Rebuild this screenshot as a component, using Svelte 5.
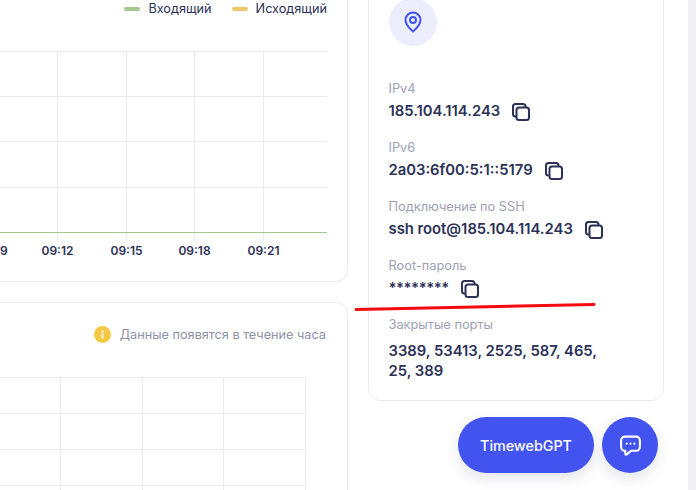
<script>
  const times = [
    { label: '09:12', x: 57.5 },
    { label: '09:15', x: 126.5 },
    { label: '09:18', x: 194.5 },
    { label: '09:21', x: 263.5 }
  ];
  const topRows = [5.5, 50.5, 95.5, 141.5];
  const bottomRows = [0.5, 36.5, 72.5, 108.5];
  const bottomCols = [60.5, 142.5, 223.5, 305.5];

  const fields = [
    { label: 'IPv4', value: '185.104.114.243' },
    { label: 'IPv6', value: '2a03:6f00:5:1::5179' },
    { label: 'Подключение по SSH', value: 'ssh root@185.104.114.243' },
    { label: 'Root-пароль', value: '********', secret: true }
  ];
</script>

{#snippet copyIcon()}
  <svg class="copy" viewBox="0 0 20 20" width="20" height="20" fill="none" stroke="currentColor" stroke-width="2">
    <path d="M4.5 14.5 A2.5 2.5 0 0 1 2 12 V4.5 A2.5 2.5 0 0 1 4.5 2 H12 A2.5 2.5 0 0 1 14.5 4.5" stroke-linecap="round" />
    <rect x="5.5" y="5.5" width="12.5" height="12.5" rx="2.5" />
  </svg>
{/snippet}

<div class="page">
  <main class="content">
    <div class="left">
      <section class="card traffic">
        <div class="legend">
          <span class="key"><i class="swatch in"></i>Входящий</span>
          <span class="key"><i class="swatch out"></i>Исходящий</span>
        </div>
        <svg class="chart" width="348" height="195" viewBox="0 0 348 195">
          {#each topRows as y}
            <line x1="0" x2="327" y1={y} y2={y} stroke="#e9ebf1" />
          {/each}
          {#each times as t}
            <line x1={t.x} x2={t.x} y1="5" y2="195" stroke="#e9ebf1" />
          {/each}
          <line x1="0" x2="327" y1="186.5" y2="186.5" stroke="#a3c78f" />
        </svg>
        <div class="axis">
          <span class="tick" style="left: 0px">9</span>
          {#each times as t}
            <span class="tick mid" style="left: {t.x}px">{t.label}</span>
          {/each}
        </div>
      </section>

      <section class="card data">
        <div class="notice">
          <svg viewBox="0 0 16 16" width="17" height="17">
            <circle cx="8" cy="8" r="8" fill="#f4c842" />
            <rect x="7.1" y="7" width="1.8" height="4.6" fill="#fff" />
            <rect x="7.1" y="4.2" width="1.8" height="1.8" fill="#fff" />
          </svg>
          <span>Данные появятся в течение часа</span>
        </div>
        <svg class="grid" width="348" height="120" viewBox="0 0 348 120">
          {#each bottomRows as y}
            <line x1="0" x2="305.5" y1={y} y2={y} stroke="#e9ebf1" />
          {/each}
          {#each bottomCols as x}
            <line x1={x} x2={x} y1="0" y2="120" stroke="#e9ebf1" />
          {/each}
        </svg>
      </section>
    </div>

    <aside class="card info">
      <div class="pin">
        <svg viewBox="0 0 20 22" width="20" height="22" fill="none" stroke="#4353f0" stroke-width="2">
          <path d="M10 20.5 C6 17 2.5 13.8 2.5 9 A7.5 7.5 0 0 1 17.5 9 C17.5 13.8 14 17 10 20.5 Z" stroke-linejoin="round" />
          <circle cx="10" cy="9" r="3" />
        </svg>
      </div>
      {#each fields as f}
        <div class="field">
          <div class="label">{f.label}</div>
          <div class="value" class:secret={f.secret}>
            <span>{f.value}</span>
            {@render copyIcon()}
          </div>
        </div>
      {/each}
      <div class="field">
        <div class="label">Закрытые порты</div>
        <div class="value ports">3389, 53413, 2525, 587, 465, 25, 389</div>
      </div>
    </aside>
  </main>
  <div class="scrollbar"></div>

  <svg class="scribble" width="696" height="490" viewBox="0 0 696 490">
    <path d="M356 309.5 L594 304.5" fill="none" stroke="#f50a10" stroke-width="3" stroke-linecap="round" />
  </svg>

  <div class="floating">
    <button class="gpt">TimewebGPT</button>
    <button class="chat" aria-label="Чат">
      <svg viewBox="0 0 24 24" width="25" height="25" fill="none" stroke="#fff" stroke-width="2">
        <path d="M6.5 3.5 H17.5 A3.5 3.5 0 0 1 21 7 V13.5 A3.5 3.5 0 0 1 17.5 17 H12.5 L8.5 20.5 C7.8 21 7 20.7 7 19.8 V17 H6.5 A3.5 3.5 0 0 1 3 13.5 V7 A3.5 3.5 0 0 1 6.5 3.5 Z" stroke-linejoin="round" />
        <circle cx="8.3" cy="10.2" r="1" fill="#fff" stroke="none" />
        <circle cx="12" cy="10.2" r="1" fill="#fff" stroke="none" />
        <circle cx="15.7" cy="10.2" r="1" fill="#fff" stroke="none" />
      </svg>
    </button>
  </div>
</div>

<style>
  :global(body) {
    margin: 0;
    background: #fff;
    font-family: Inter, "Liberation Sans", sans-serif;
    color: #2b3157;
  }

  .page {
    position: relative;
    display: flex;
    width: 696px;
    height: 490px;
    overflow: hidden;
    background: #fff;
  }

  .content {
    flex: 1;
    display: flex;
    align-items: flex-start;
    gap: 20px;
    margin-top: -40px;
  }

  .left {
    width: 348px;
    flex: none;
    display: flex;
    flex-direction: column;
    gap: 20px;
  }

  .card {
    box-sizing: border-box;
    background: #fff;
    border: 1px solid #e9ebf1;
    border-radius: 12px;
  }

  .left .card {
    border-left: none;
    border-top-left-radius: 0;
    border-bottom-left-radius: 0;
  }

  .traffic {
    height: 322px;
    padding-top: 38px;
  }

  .legend {
    display: flex;
    justify-content: flex-end;
    gap: 20px;
    padding-right: 20px;
    font-size: 12.7px;
    line-height: 20px;
  }

  .key {
    display: flex;
    align-items: center;
    gap: 8px;
  }

  .swatch {
    width: 16px;
    height: 4px;
    border-radius: 2px;
  }

  .swatch.in { background: #a3c78f; }
  .swatch.out { background: #ecc868; }

  .chart {
    display: block;
    margin-top: 27px;
  }

  .axis {
    position: relative;
    height: 20px;
    font-size: 12px;
    font-weight: 600;
    line-height: 20px;
  }

  .tick {
    position: absolute;
    top: 0;
  }

  .tick.mid {
    transform: translateX(-50%);
  }

  .data {
    height: 240px;
  }

  .notice {
    display: flex;
    justify-content: flex-end;
    align-items: center;
    gap: 9px;
    padding: 23px 21px 0 0;
    font-size: 12.7px;
    line-height: 16px;
    color: #8f93a8;
  }

  .grid {
    display: block;
    margin-top: 34px;
  }

  .info {
    width: 296px;
    height: 441px;
    flex: none;
    padding: 37px 20px 0 19.5px;
  }

  .pin {
    width: 48px;
    height: 48px;
    border-radius: 50%;
    background: #eceefe;
    display: flex;
    align-items: center;
    justify-content: center;
    margin-bottom: 33px;
  }

  .field {
    margin-bottom: 14px;
  }

  .label {
    font-size: 12.8px;
    line-height: 20px;
    margin-bottom: -1px;
    color: #9ea2b5;
  }

  .value {
    display: flex;
    align-items: center;
    gap: 11px;
    min-height: 26px;
    font-size: 14.8px;
    font-weight: 600;
    line-height: 24px;
  }

  .value.secret span {
    letter-spacing: -0.45px;
  }

  .ports {
    display: block;
    max-width: 215px;
    margin-top: 7px;
    line-height: 20px;
  }

  .copy {
    flex: none;
    margin-top: 2px;
  }

  .scrollbar {
    width: 8px;
    flex: none;
    background: #f1f1f3;
  }

  .scribble {
    position: absolute;
    inset: 0;
    pointer-events: none;
  }

  .floating {
    position: absolute;
    right: 38px;
    bottom: 17px;
    display: flex;
    gap: 8px;
  }

  button {
    height: 56px;
    border: none;
    border-radius: 28px;
    background: #4353f0;
    color: #fff;
    font: 500 14.3px Inter, "Liberation Sans", sans-serif;
    box-shadow: 0 6px 14px rgba(43, 49, 87, 0.12);
  }

  .gpt {
    width: 136px;
  }

  .chat {
    width: 56px;
    display: flex;
    align-items: center;
    justify-content: center;
    padding: 0;
  }
</style>
